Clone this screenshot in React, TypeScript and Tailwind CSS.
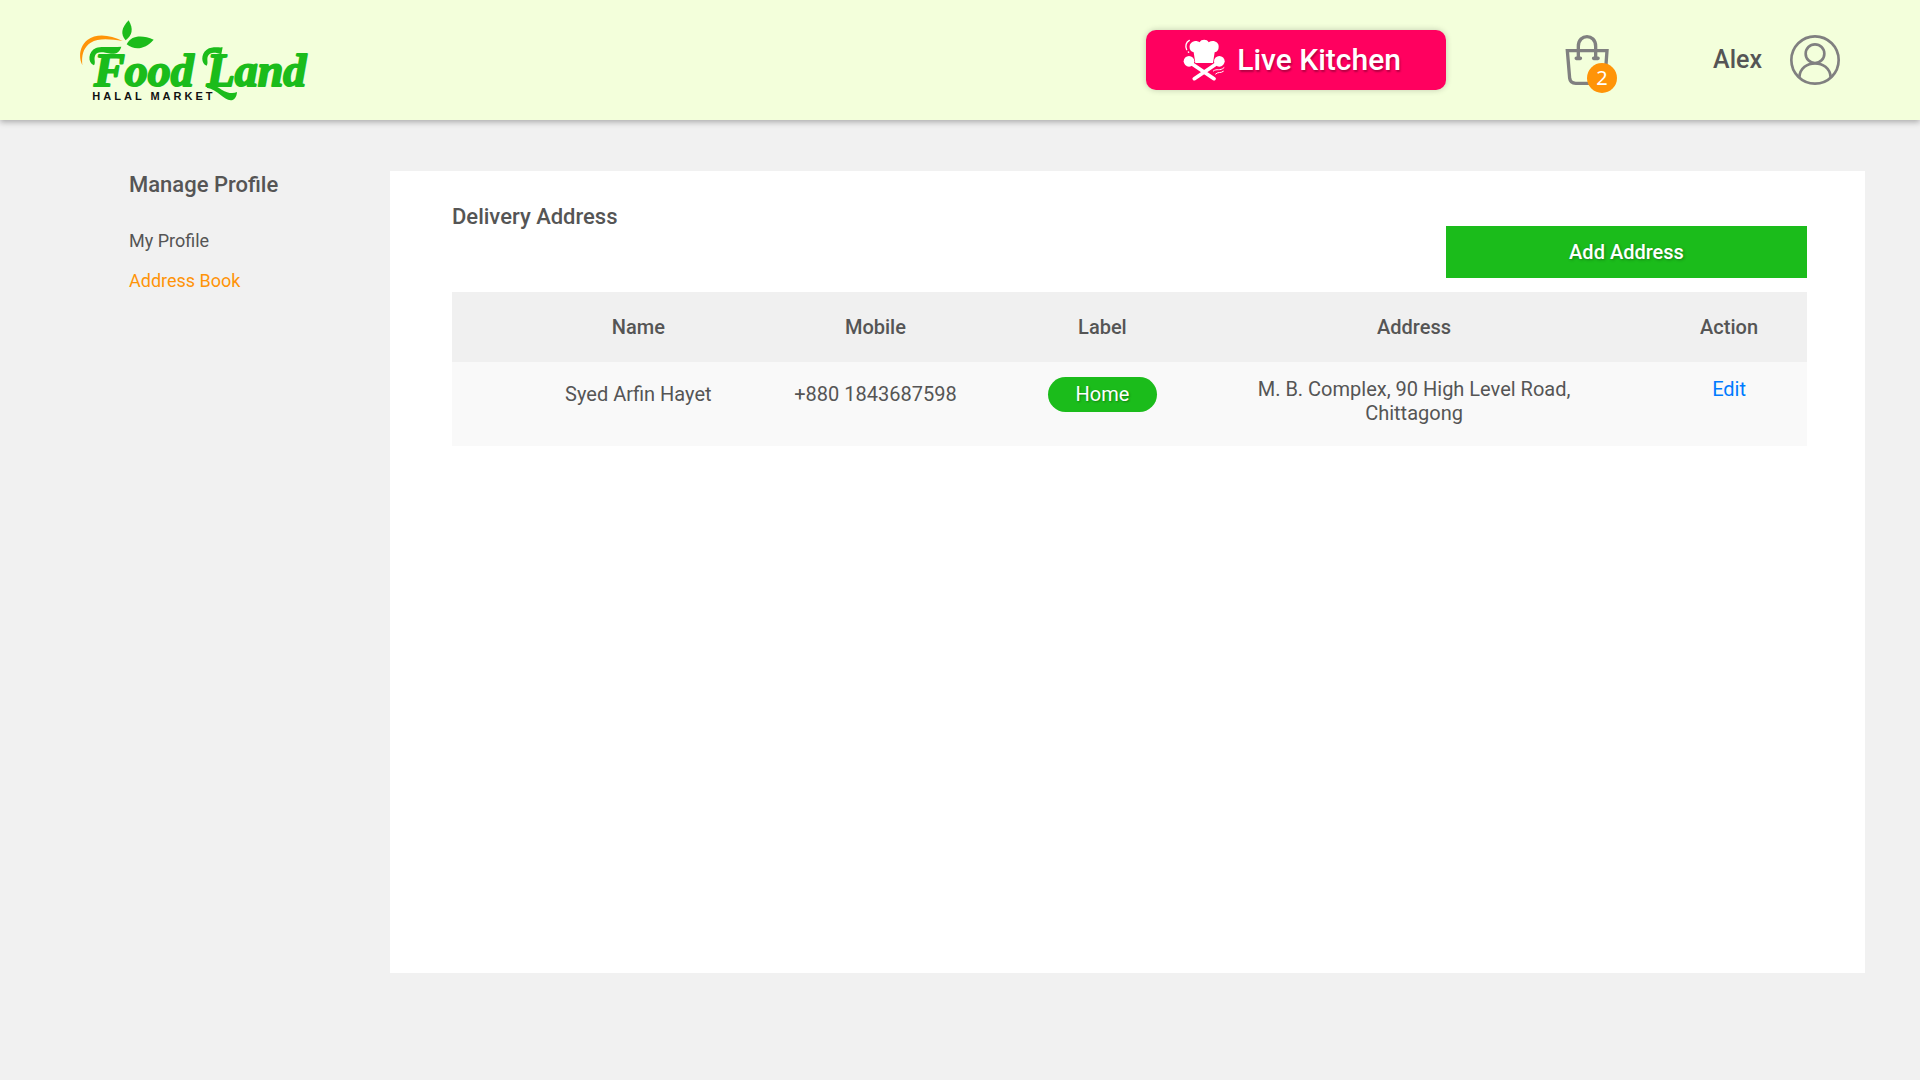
const addresses = [
  {
    name: 'Syed Arfin Hayet',
    mobile: '+880 1843687598',
    label: 'Home',
    address: 'M. B. Complex, 90 High Level Road, Chittagong',
  },
];

function Logo() {
  return (
    <svg viewBox="60 53 690 255" className="h-[85px] w-[230px]" role="img" aria-label="Food Land Halal Market">
      <path d="M67 195C54 168 60 137 82 119C110 98 151 104 188 122C151 116 116 112 92 127C70 141 64 165 67 195Z" fill="#ff9408" />
      <path d="M206 60C221 86 217 105 197 120C181 103 184 82 206 60Z" fill="#1bbc1b" />
      <path d="M200 132C213 105 246 103 281 118C256 146 226 152 200 132Z" fill="#1bbc1b" />
      <path d="M440 262C449 245 466 256 485 268C503 279 519 281 531 275C530 290 523 300 512 300C491 299 474 268 440 262Z" fill="#1bbc1b" />
      <path d="M102 195C82 188 84 153 108 143C126 136 150 143 184 139C179 156 169 161 153 160C130 156 111 151 105 166C101 178 108 185 102 195Z" fill="#1bbc1b" />
      <path d="M440 196C423 191 422 160 440 148C455 138 472 142 488 141L484 162C467 156 451 154 444 167C439 178 446 187 440 196Z" fill="#1bbc1b" />
      <g fill="#1bbc1b" stroke="#1bbc1b" strokeWidth="6" strokeLinejoin="round" className="font-['Liberation_Serif',serif] text-[138px] font-bold italic">
        <text x="102" y="257">Food</text>
        <text x="440" y="257">Land</text>
      </g>
      <text x="97" y="299" fill="#111" className="font-['Liberation_Sans',sans-serif] text-[33px] font-bold tracking-[9px]">
        HALAL MARKET
      </text>
    </svg>
  );
}

function ChefIcon() {
  return (
    <svg viewBox="28 28 126 126" className="size-[42px]" fill="none" stroke="#fff" strokeLinecap="round" aria-hidden="true">
      <path d="M65 100L60 68C43 65 43 36 64 34C71 34 76 36 78 38C82 28 101 28 105 38C118 29 136 37 135 51C135 61 131 66 123 68L118 100Z" fill="#fff" stroke="none" />
      <circle cx="46" cy="95" r="16" fill="#fff" stroke="none" />
      <circle cx="137" cy="95" r="16" fill="#fff" stroke="none" />
      <path d="M50 99L121 147M133 99L62 147" strokeWidth="11" />
      <path d="M47 32C37 37 34 49 39 60M44 67L45 68" strokeWidth="4" />
      <path d="M119 124C130 115 138 126 151 114M126 133C134 125 140 132 149 125" strokeWidth="3" />
    </svg>
  );
}

function BagIcon() {
  return (
    <svg viewBox="75 42 135 156" className="h-[52px] w-[45px]" fill="none" stroke="#808080" strokeWidth="10" aria-hidden="true">
      <path d="M82 92H201L195 175Q193 190 178 190H107Q91 190 89 175Z" />
      <path d="M115 114V79C115 40 167 40 167 79V114" />
      <path d="M109 115H121M161 115H174" strokeWidth="11" strokeLinecap="round" />
    </svg>
  );
}

function UserIcon() {
  return (
    <svg viewBox="0 0 150 150" className="size-[50px]" fill="none" stroke="#808080" strokeWidth="8" aria-hidden="true">
      <circle cx="75" cy="75" r="71" />
      <circle cx="75" cy="56" r="28" />
      <path d="M28 127C31 71 119 71 122 127" />
    </svg>
  );
}

function Header() {
  return (
    <header className="relative flex h-[120px] items-center bg-[#f3ffdb] px-20 shadow-[0_2px_6px_rgba(0,0,0,0.3)]">
      <a href="#home" className="mr-auto">
        <Logo />
      </a>
      <button
        type="button"
        className="mr-[119px] flex h-[60px] w-[300px] items-center justify-center gap-3 rounded-[10px] bg-[#ff005f] pr-2 text-3xl font-medium text-white shadow-[0_0_6px_rgba(0,0,0,0.2)] text-shadow-[1px_2px_2px_rgba(0,0,0,0.3)]"
      >
        <ChefIcon />
        Live Kitchen
      </button>
      <button type="button" aria-label="Cart, 2 items" className="relative mr-[103px]">
        <BagIcon />
        <span className="absolute -right-[7px] -bottom-[7px] flex size-[30px] items-center justify-center rounded-full bg-[#ff9408] font-['Noto_Sans',sans-serif] text-xl text-white">
          2
        </span>
      </button>
      <a href="#account" className="flex items-center gap-7 text-[25px] font-medium">
        Alex
        <UserIcon />
      </a>
    </header>
  );
}

function Sidebar() {
  return (
    <aside className="w-[261px] shrink-0">
      <h2 className="text-[22px] leading-7 font-medium">Manage Profile</h2>
      <nav className="mt-[30px] flex flex-col items-start gap-4 text-lg leading-6">
        <a href="#profile">My Profile</a>
        <a href="#addresses" className="text-[#ff9408]" aria-current="page">
          Address Book
        </a>
      </nav>
    </aside>
  );
}

function AddressTable() {
  return (
    <table className="mt-3.5 w-full table-fixed text-center text-xl leading-6">
      <colgroup>
        <col className="w-[7.5%]" />
        <col className="w-[12.5%]" />
        <col className="w-[22.5%]" />
        <col className="w-[11%]" />
        <col className="w-[35%]" />
        <col className="w-[11.5%]" />
      </colgroup>
      <thead>
        <tr className="h-[70px] bg-[#f0f0f0]">
          <td />
          <th className="font-medium">Name</th>
          <th className="font-medium">Mobile</th>
          <th className="font-medium">Label</th>
          <th className="font-medium">Address</th>
          <th className="font-medium">Action</th>
        </tr>
      </thead>
      <tbody>
        {addresses.map((a) => (
          <tr key={a.mobile} className="h-[84px] bg-[#f9f9f9] align-top">
            <td />
            <td className="pt-5 whitespace-nowrap">{a.name}</td>
            <td className="pt-5">{a.mobile}</td>
            <td className="pt-[15px]">
              <span className="mx-auto flex h-[35px] w-[109px] items-center justify-center rounded-full bg-[#1bbc1b] pb-px text-white text-shadow-[1px_1px_2px_rgba(0,0,0,0.3)]">
                {a.label}
              </span>
            </td>
            <td className="px-[70px] pt-[15px]">{a.address}</td>
            <td className="pt-[15px]">
              <a href="#edit" className="text-[#007bff]">
                Edit
              </a>
            </td>
          </tr>
        ))}
      </tbody>
    </table>
  );
}

export default function App() {
  return (
    <div className="min-h-screen bg-[#f1f1f1] font-['Roboto',sans-serif] text-[#555]">
      <Header />
      <div className="flex pt-[51px] pr-[55px] pb-[107px] pl-[129px]">
        <Sidebar />
        <main className="min-h-[802px] flex-1 bg-white pt-8 pr-[58px] pl-[62px]">
          <h1 className="text-[22px] leading-7 font-medium">Delivery Address</h1>
          <div className="-mt-[5px] flex justify-end">
            <button
              type="button"
              className="h-[52px] w-[361px] bg-[#1bbc1b] text-xl font-medium text-white text-shadow-[1px_1px_3px_rgba(0,0,0,0.3)]"
            >
              Add Address
            </button>
          </div>
          <AddressTable />
        </main>
      </div>
    </div>
  );
}
